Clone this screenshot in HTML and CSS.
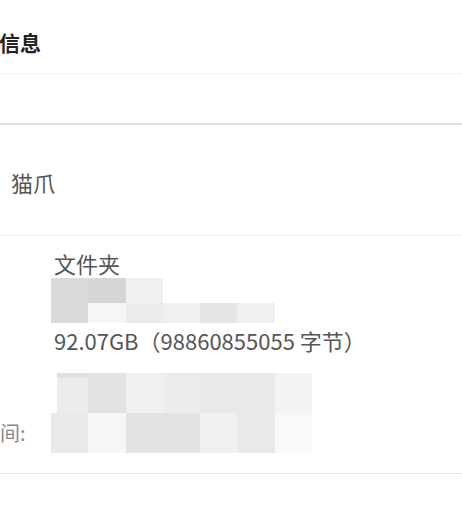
FILE: index.html
```html
<!DOCTYPE html>
<html lang="zh-CN">
<head>
    <meta charset="UTF-8">
    <meta name="viewport" content="width=device-width, initial-scale=1.0">
    <title>属性</title>
    <link rel="stylesheet" href="styles.css">
</head>
<body>
    <div class="panel">
        <div class="panel-head">
            <h3 class="title">信息</h3>
        </div>
        <div class="blank-row"></div>
        <div class="name-row">
            <span class="name">猫爪</span>
        </div>

        <div class="details">
            <div class="label"></div>
            <div class="value text row-type">文件夹</div>

            <div class="label"></div>
            <!-- 位置：已打码 -->
            <div class="value mosaic mosaic-path">
                <i class="c2"></i><i class="c3"></i><i class="c8"></i><i></i><i></i><i></i>
                <i class="c2"></i><i class="c9"></i><i class="c7"></i><i class="c8"></i><i class="c5"></i><i class="c8"></i>
            </div>

            <div class="label"></div>
            <div class="value text row-size">92.07GB（98860855055 字节）</div>

            <div class="label label-bottom">间:</div>
            <!-- 时间：已打码 -->
            <div class="value mosaic mosaic-time">
                <i class="c7 notch"></i><i class="c4"></i><i class="c8"></i><i class="c7"></i><i class="c6"></i><i class="c6"></i><i class="c10"></i>
                <i class="c6"></i><i class="c9"></i><i class="c4"></i><i class="c4"></i><i class="c8"></i><i class="c6"></i><i class="c11"></i>
            </div>
        </div>
    </div>
</body>
</html>
```

FILE: styles.css
```css
* {
    margin: 0;
    padding: 0;
    box-sizing: border-box;
}

html, body {
    width: 100%;
    height: 100%;
    background: #fff;
    overflow: hidden;
}

body {
    font-family: "Noto Sans CJK SC", "Noto Sans", sans-serif;
    color: #555;
}

.panel {
    display: flex;
    flex-direction: column;
}

.panel-head {
    height: 74px;
    display: flex;
    align-items: center;
    padding-top: 10px;
    border-bottom: 1px solid #f0f0f0;
}

.title {
    font-size: 21px;
    font-weight: bold;
    color: #222;
    margin-left: -1px;
}

.blank-row {
    height: 51px;
    border-bottom: 2px solid #dedede;
}

.name-row {
    height: 111px;
    display: flex;
    align-items: center;
    padding-left: 11px;
    padding-top: 4px;
    border-bottom: 1px solid #f0f0f0;
}

.name {
    font-size: 22px;
    color: #555;
}

.details {
    display: grid;
    grid-template-columns: 51px 1fr;
    align-items: start;
    padding-top: 14px;
    padding-bottom: 20px;
    border-bottom: 1px solid #e6e6e6;
}

.label {
    font-size: 20px;
    color: #888;
    white-space: nowrap;
}

.label-bottom {
    align-self: end;
    line-height: 40px;
}

.text {
    font-size: 22px;
    color: #555;
    padding-left: 3px;
}

.row-type {
    line-height: 26px;
    margin-bottom: 2px;
}

.row-size {
    line-height: 34px;
    margin-bottom: 16px;
}

/* 打码的马赛克块 */
.mosaic {
    display: grid;
    filter: blur(0.4px);
}

.mosaic-path {
    grid-template-columns: repeat(6, 37.3px);
    grid-template-rows: 25px 20px;
}

.mosaic-time {
    grid-template-columns: repeat(7, 37.3px);
    grid-template-rows: 40px 40px;
}

.mosaic i {
    display: block;
}

.mosaic .notch {
    margin-left: 6px;
    border-top: 5px solid #e0e0e0;
}

.c2 { background: #dadada; }
.c3 { background: #d6d6d6; }
.c4 { background: #e3e3e3; }
.c5 { background: #e5e5e5; }
.c6 { background: #e9e9e9; }
.c7 { background: #ececec; }
.c8 { background: #f0f0f0; }
.c9 { background: #f6f6f6; }
.c10 { background: #f3f3f5; }
.c11 { background: #f9f9f9; }
```
